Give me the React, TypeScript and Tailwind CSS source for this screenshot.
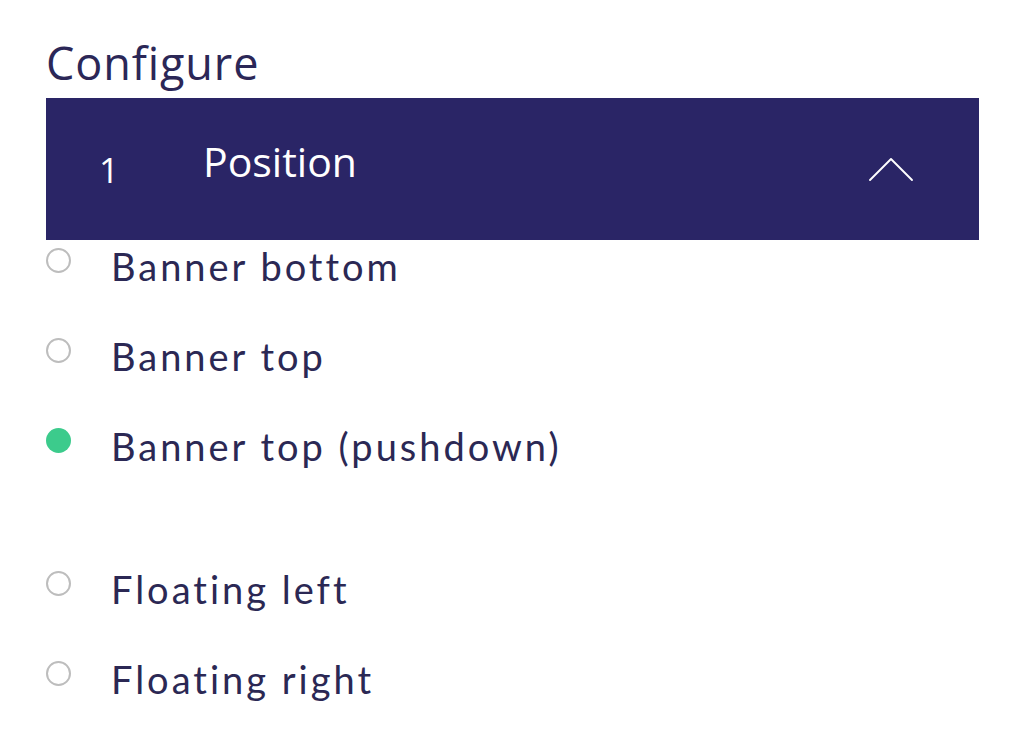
const options = [
    { label: 'Banner bottom', selected: false },
    { label: 'Banner top', selected: false },
    { label: 'Banner top (pushdown)', selected: true, gapAfter: true },
    { label: 'Floating left', selected: false },
    { label: 'Floating right', selected: false },
];

function Chevron() {
    return (
        <svg width="46" height="26" viewBox="0 0 46 26" fill="none" className="block">
            <path d="M2 24 L23 3 L44 24" stroke="#ffffff" strokeWidth="1.9" strokeLinecap="round" strokeLinejoin="round" />
        </svg>
    );
}

export default function App() {
    return (
        <div className="w-[1024px] h-[752px] bg-white pl-[46px] pr-[45px] overflow-hidden">
            <h1
                className="mt-[40px] text-[45px] leading-none text-[#2b2757] tracking-[0.9px]"
                style={{ fontFamily: '"Open Sans", sans-serif' }}
            >
                Configure
            </h1>

            <div
                className="mt-[13px] h-[142px] bg-[#2a2566] flex items-start text-white pl-[53px] pr-[65px]"
                style={{ fontFamily: '"Open Sans", sans-serif' }}
            >
                <span className="mt-[54px] text-[35px] leading-none w-[104px]">1</span>
                <span className="mt-[43px] text-[41px] leading-none flex-1">Position</span>
                <span className="mt-[58px]">
                    <Chevron />
                </span>
            </div>

            <ul className="mt-[8px]" style={{ fontFamily: 'Lato, sans-serif' }}>
                {options.map(opt => (
                    <li
                        key={opt.label}
                        className={`flex items-start h-[90px] ${opt.gapAfter ? 'mb-[53px]' : ''}`}
                    >
                        {opt.selected ? (
                            <span className="w-[25px] h-[25px] rounded-full bg-[#3ccb8c] shrink-0" />
                        ) : (
                            <span className="w-[25px] h-[25px] rounded-full border-2 border-[#bdbdbd] bg-white shrink-0" />
                        )}
                        <span className="ml-[40px] -mt-[1px] text-[38px] leading-none tracking-[3px] text-[#2b2854]">
                            {opt.label}
                        </span>
                    </li>
                ))}
            </ul>
        </div>
    );
}
